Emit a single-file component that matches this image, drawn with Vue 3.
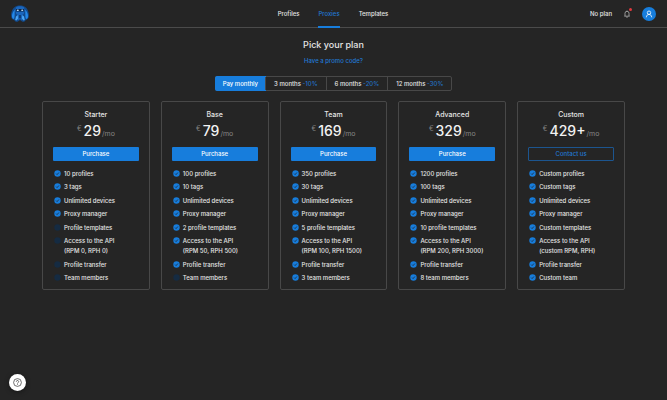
<script setup>
import { ref } from 'vue'

const nav = ['Profiles', 'Proxies', 'Templates']
const currentNav = 'Proxies'

const periods = [
  { label: 'Pay monthly', discount: '' },
  { label: '3 months', discount: '-10%' },
  { label: '6 months', discount: '-20%' },
  { label: '12 months', discount: '-30%' },
]
const period = ref('Pay monthly')

const row = (text, on = true, note = '') => ({ text, on, note })
const makePlan = (name, price, action, profiles, tags, templates, limits, members, off = []) => ({
  name,
  price,
  action,
  features: [
    row(profiles),
    row(tags),
    row('Unlimited devices'),
    row('Proxy manager'),
    row(templates, !off.includes('templates')),
    row('Access to the API', !off.includes('api'), limits),
    row('Profile transfer', !off.includes('transfer')),
    row(members, !off.includes('members')),
  ],
})

const plans = [
  makePlan('Starter', '29', 'Purchase', '10 profiles', '3 tags', 'Profile templates', '(RPM 0, RPH 0)', 'Team members', ['templates', 'api', 'transfer', 'members']),
  makePlan('Base', '79', 'Purchase', '100 profiles', '10 tags', '2 profile templates', '(RPM 50, RPH 500)', 'Team members', ['members']),
  makePlan('Team', '169', 'Purchase', '350 profiles', '30 tags', '5 profile templates', '(RPM 100, RPH 1500)', '3 team members'),
  makePlan('Advanced', '329', 'Purchase', '1200 profiles', '100 tags', '10 profile templates', '(RPM 200, RPH 3000)', '8 team members'),
  makePlan('Custom', '429+', 'Contact us', 'Custom profiles', 'Custom tags', 'Custom templates', '(custom RPM, RPH)', 'Custom team'),
]
</script>

<template>
  <div class="page">
    <header class="header">
      <a href="#" class="logo" aria-label="Home">
        <svg viewBox="0 0 20 20" width="20" height="20" aria-hidden="true">
          <path fill="#124a8c" d="M5.500 2.500C7.500 1 12.500 1 14.500 2.500c2.800 1.500 4.400 5.500 4.400 9 0 2.500-1.200 4.300-3.200 4.600-.5 1.700-2.600 2.300-4 1.200L10 16l-1.700 1.300c-1.400 1.100-3.500.5-4-1.200-2-.3-3.200-2.100-3.200-4.600 0-3.500 1.600-7.500 4.400-9z" />
          <path fill="#2387e8" d="M5 5.500C3 7.500 1.800 10 2 12.500c.1 1.500.8 2.400 1.800 2.600C5.300 13 4.200 9 5 5.500zM15 5.500c2 2 3.200 4.500 3 7-.1 1.500-.8 2.400-1.800 2.600C14.700 13 15.800 9 15 5.500z" />
          <path fill="#1a66bd" d="M6.200 3C8 2 12 2 13.800 3l.7 2.500-.5 4-2 2 .8 4-1.300.8L10 14.500l-1.500 1.800-1.300-.8.800-4-2-2-.500-4z" />
          <path fill="#0a2549" d="M6 5h8v2.600H6zM9.400 11h1.200v3.200H9.400z" />
          <ellipse cx="7.800" cy="6.200" rx="1.100" ry=".8" fill="#c4e6ff" />
          <ellipse cx="12.200" cy="6.200" rx="1.100" ry=".8" fill="#c4e6ff" />
          <path fill="#4aa6f5" d="M6 12.500l1.800-1.500.2 3.500-1.500 2-1.300-.6zM14 12.500L12.200 11l-.2 3.500 1.500 2 1.300-.6z" />
        </svg>
      </a>
      <nav class="nav">
        <a v-for="item in nav" :key="item" href="#" :class="['nav-link', { active: item === currentNav }]">{{ item }}</a>
      </nav>
      <div class="account">
        <span>No plan</span>
        <button class="icon-button bell" aria-label="Notifications">
          <svg viewBox="0 0 8 8" width="8" height="8" fill="none" stroke="#c4c4c4" stroke-width=".7" aria-hidden="true">
            <path d="M1.300 6.200h5.400M2 6V3.300a2 2 0 0 1 4 0V6M4 1.300V.6M3.300 7.200h1.400" />
          </svg>
          <span class="dot"></span>
        </button>
        <button class="icon-button avatar" aria-label="Account">
          <svg viewBox="0 0 8 8" width="8" height="8" fill="none" stroke="#fff" stroke-width=".8" aria-hidden="true">
            <circle cx="4" cy="2.700" r="1.700" />
            <path d="M1.300 7.300C1.400 5.500 2.500 4.400 4 4.400s2.600 1.100 2.700 2.900" />
          </svg>
        </button>
      </div>
    </header>

    <main class="main">
      <h1 class="title">Pick your plan</h1>
      <a href="#" class="promo">Have a promo code?</a>

      <div class="periods" role="group" aria-label="Billing period">
        <button
          v-for="p in periods"
          :key="p.label"
          :class="['period', { selected: period === p.label }]"
          :aria-pressed="period === p.label"
          @click="period = p.label"
        >{{ p.label }}<span v-if="p.discount" class="discount">&nbsp;{{ p.discount }}</span></button>
      </div>

      <div class="plans">
        <section v-for="plan in plans" :key="plan.name" class="plan">
          <h2 class="plan-name">{{ plan.name }}</h2>
          <p class="price">
            <span class="currency">€</span>
            <strong class="amount">{{ plan.price }}</strong>
            <span class="per">/mo</span>
          </p>
          <button :class="['action', { outline: plan.action === 'Contact us' }]">{{ plan.action }}</button>
          <ul class="features">
            <li v-for="f in plan.features" :key="f.text" :class="['feature', { off: !f.on }]">
              <svg class="check" viewBox="0 0 7 7" width="7" height="7" aria-hidden="true">
                <circle class="disc" cx="3.500" cy="3.500" r="3.200" />
                <path v-if="f.on" d="M2.100 3.600l1 1 1.800-2.100" fill="none" stroke="#1f2b38" stroke-width=".8" />
              </svg>
              <span>{{ f.text }}<template v-if="f.note"><br />{{ f.note }}</template></span>
            </li>
          </ul>
        </section>
      </div>
    </main>

    <button class="help" aria-label="Help">
      <svg viewBox="0 0 9 9" width="9" height="9" fill="none" stroke="#333" stroke-width=".7" aria-hidden="true">
        <circle cx="4.500" cy="4.500" r="3.900" />
        <path d="M3.300 3.700a1.200 1.200 0 1 1 1.800 1c-.4.200-.6.400-.6.800M4.500 6.200v.7" />
      </svg>
    </button>
  </div>
</template>

<style>
body {
  background: #252525;
}
</style>

<style scoped>
.page {
  min-height: 100vh;
  background: #252525;
  color: #e6e6e6;
  font: 500 6px/10px Inter, "Liberation Sans", sans-serif;
}
a {
  color: inherit;
  text-decoration: none;
}
button {
  margin: 0;
  padding: 0;
  border: 0;
  background: none;
  color: inherit;
  font: inherit;
  cursor: pointer;
}
.header {
  display: grid;
  grid-template-columns: 1fr auto 1fr;
  align-items: center;
  height: 27px;
  padding: 0 11px 0 10px;
  border-bottom: 1px solid #4b4b4b;
}
.logo {
  display: flex;
}
.nav {
  display: flex;
  align-self: stretch;
  gap: 19px;
}
.nav-link {
  display: flex;
  align-items: center;
  height: 24px;
  padding-top: 2px;
  border-bottom: 2px solid transparent;
}
.nav-link.active {
  color: #2279d4;
  border-color: #177ddc;
}
.account {
  display: flex;
  justify-content: flex-end;
  align-items: center;
  gap: 11px;
}
.icon-button {
  display: flex;
  align-items: center;
  justify-content: center;
}
.bell {
  position: relative;
}
.dot {
  position: absolute;
  top: -2px;
  right: -1px;
  width: 3px;
  height: 3px;
  border-radius: 50%;
  background: #e0393e;
}
.avatar {
  width: 14px;
  height: 14px;
  border-radius: 50%;
  background: #177ddc;
}
.main {
  display: flex;
  flex-direction: column;
  align-items: center;
  padding: 10px 42px 0;
}
.title {
  margin: 0;
  font-size: 9px;
  font-weight: 500;
  line-height: 14px;
}
.promo {
  margin-top: 4px;
  color: #2279d4;
}
.periods {
  display: flex;
  margin-top: 10px;
  border: 1px solid #484848;
  border-radius: 2px;
}
.period {
  height: 13px;
  padding: 0 8px;
  border-left: 1px solid #484848;
}
.period:first-child {
  border-left: 0;
}
.period.selected {
  margin: -1px;
  height: 15px;
  border-radius: 2px 0 0 2px;
  background: #177ddc;
  color: #fff;
}
.discount {
  color: #2372c8;
}
.plans {
  display: grid;
  grid-template-columns: repeat(5, 1fr);
  gap: 11px;
  width: 100%;
  margin-top: 10px;
}
.plan {
  display: flex;
  flex-direction: column;
  padding: 8px 10px 6px;
  border: 1px solid #484848;
  border-radius: 2px;
}
.plan-name {
  margin: 0;
  font-size: 7px;
  font-weight: 500;
  line-height: 10px;
  text-align: center;
}
.price {
  display: flex;
  justify-content: center;
  align-items: center;
  gap: 1px;
  height: 22px;
  margin: 0;
  color: #858585;
  font-size: 7px;
  font-weight: 400;
}
.currency {
  align-self: flex-start;
  padding: 4px 1px 0 0;
}
.amount {
  color: #f2f2f2;
  font-size: 14px;
  font-weight: 500;
  line-height: 20px;
}
.per {
  padding-top: 6px;
}
.action {
  height: 14px;
  margin-top: 5px;
  border-radius: 1px;
  background: #177ddc;
  color: #fff;
}
.action.outline {
  border: 1px solid #1c558f;
  background: none;
  color: #2279d4;
}
.features {
  display: flex;
  flex-direction: column;
  justify-content: space-between;
  min-height: 114px;
  margin: 8px 0 0;
  padding: 0 0 0 1px;
  list-style: none;
}
.feature {
  display: flex;
  gap: 3px;
  white-space: nowrap;
}
.check {
  flex: none;
  margin-top: 1px;
}
.disc {
  fill: #177ddc;
}
.off .disc {
  fill: #152b42;
}
.help {
  position: fixed;
  left: 9px;
  bottom: 9px;
  display: flex;
  align-items: center;
  justify-content: center;
  width: 17px;
  height: 17px;
  border-radius: 50%;
  background: #fff;
  box-shadow: 0 1px 5px rgba(0, 0, 0, .4);
}
</style>
